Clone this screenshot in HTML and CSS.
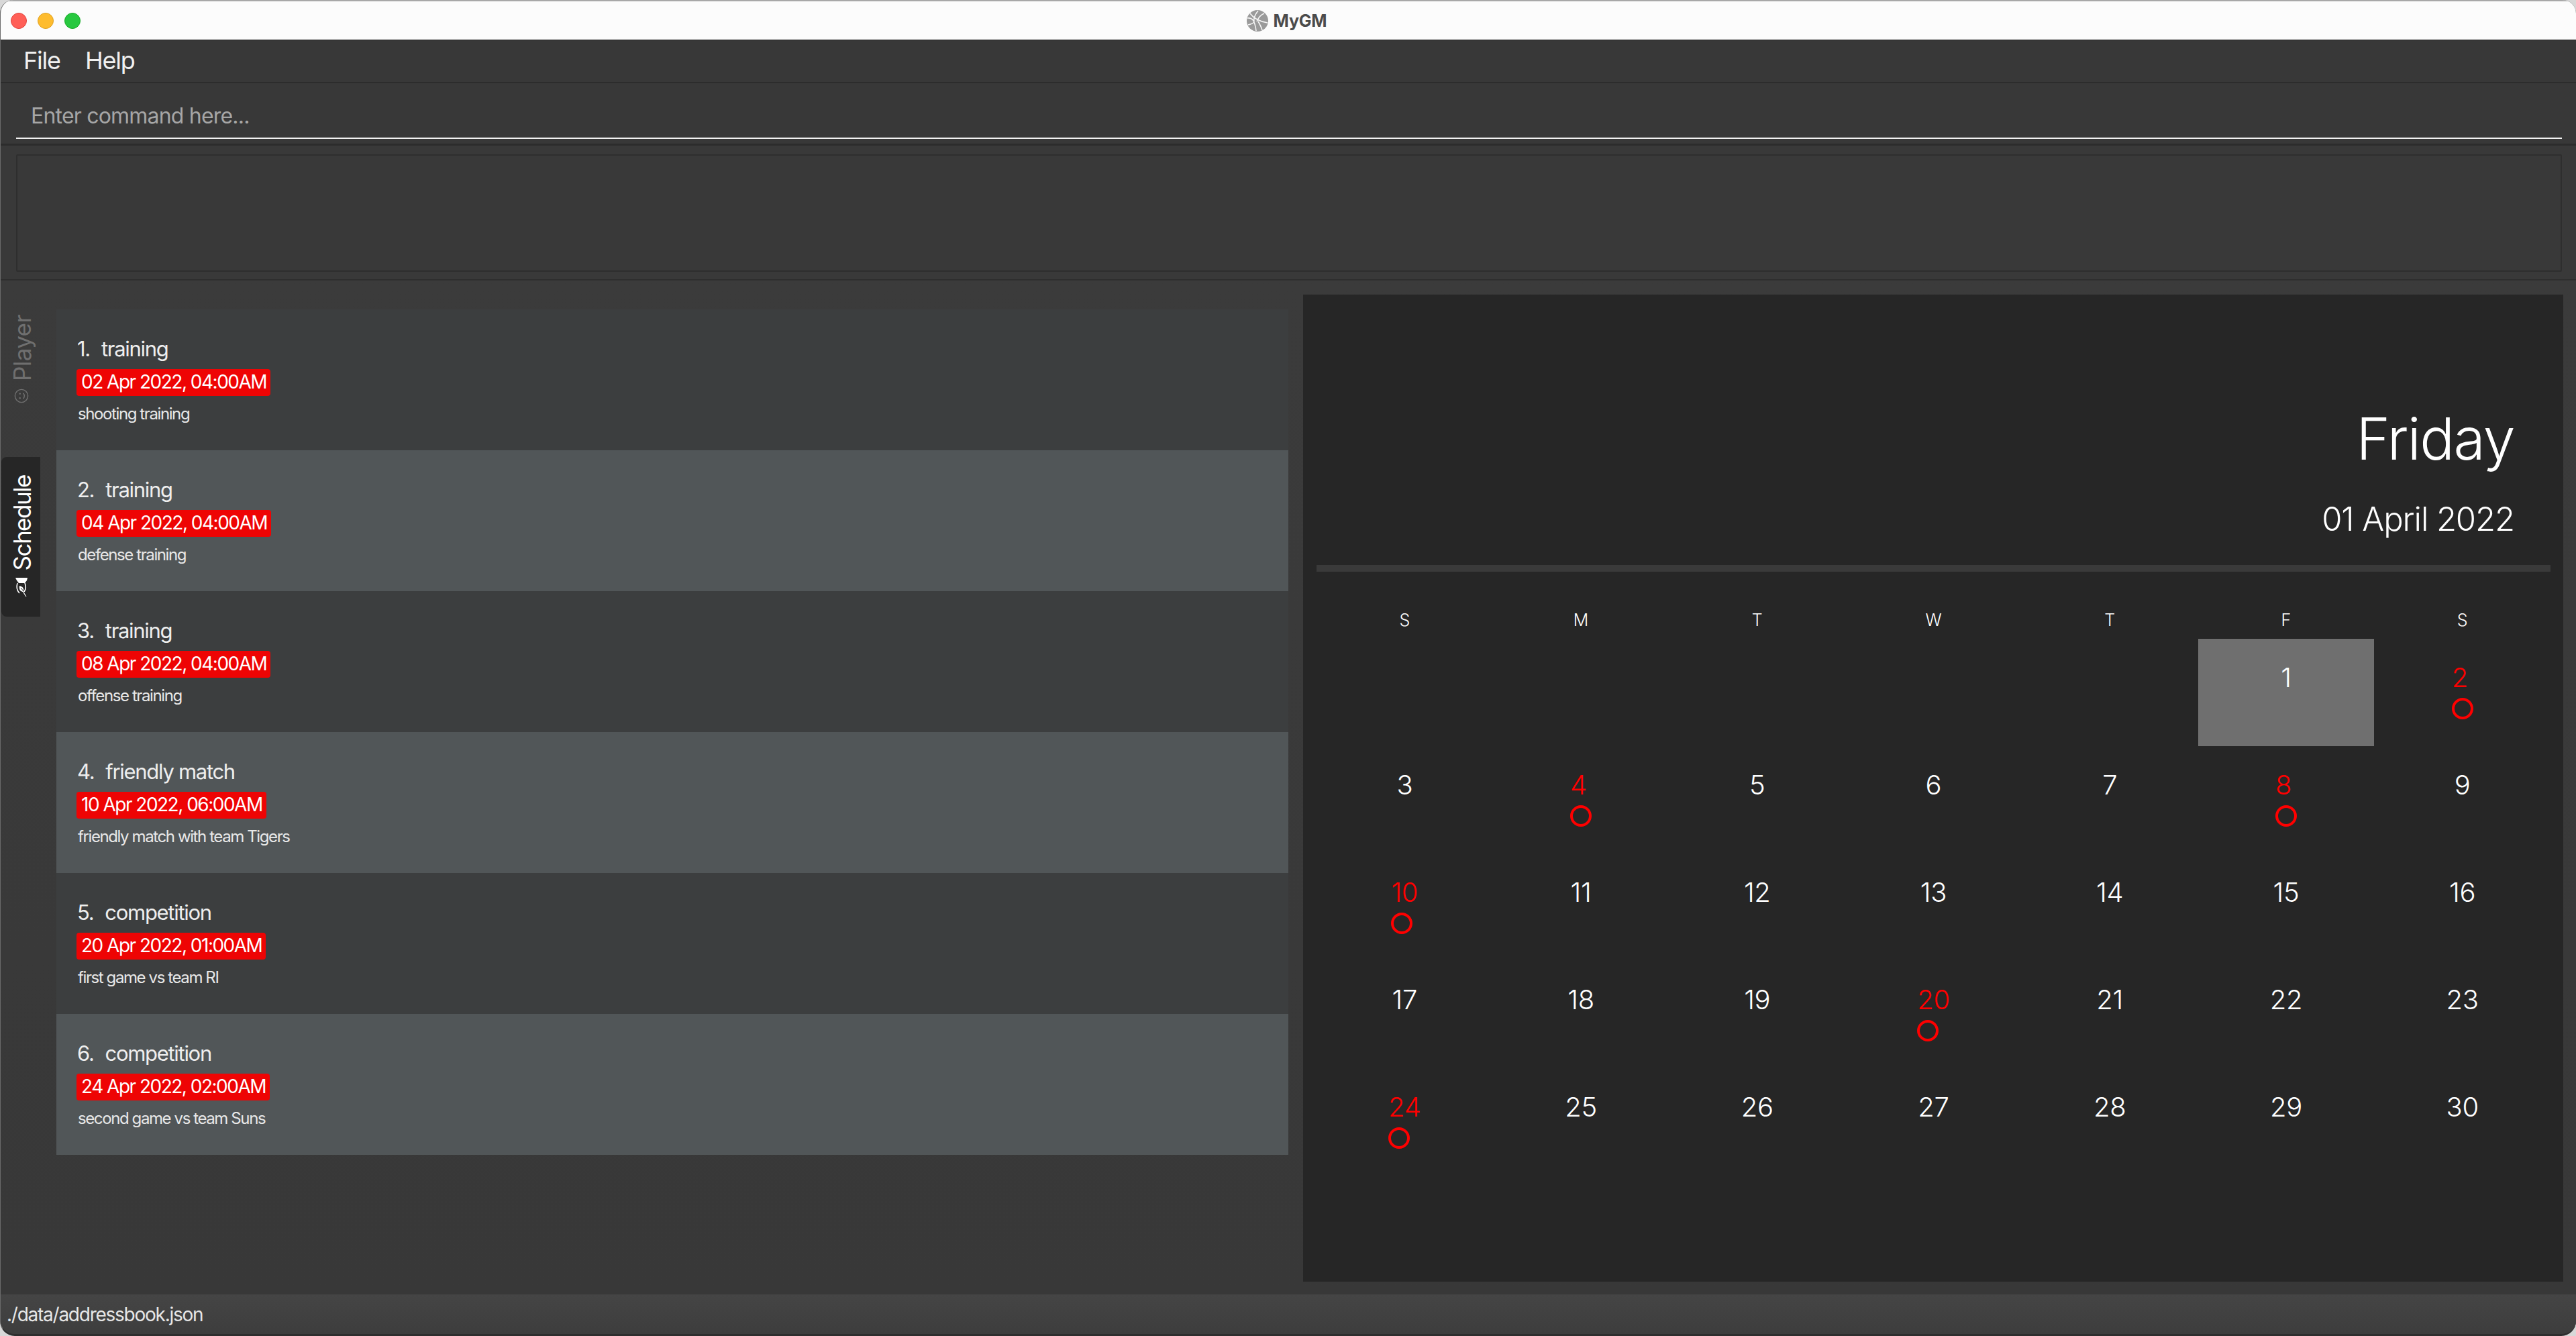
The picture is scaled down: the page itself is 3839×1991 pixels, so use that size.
FILE: index.html
```html
<!DOCTYPE html>
<html lang="en">
<head>
<meta charset="utf-8">
<title>MyGM</title>
<link rel="stylesheet" href="styles.css">
</head>
<body>
<div class="window">
  <header class="titlebar">
    <div class="lights"><span class="light red"></span><span class="light amber"></span><span class="light green"></span></div>
    <div class="app-title">
      <svg class="ball" viewBox="0 0 32 32"><circle cx="16" cy="16" r="16" fill="#9a9a9a"/><path d="M1 12c7-1 11 3 13 19M5 5c5 7 14 12 26 14M17 1c-5 6-7 12-6 17M26 5c-5 2-9 7-11 12M2 22c5-1 8-3 9-4M17 17c3 5 5 9 6 13" fill="none" stroke="#f4f4f4" stroke-width="1.6"/></svg>
      <span>MyGM</span>
    </div>
  </header>
  <nav class="menubar"><span>File</span><span>Help</span></nav>
  <section class="command"><div class="command-input">Enter command here...</div></section>
  <section class="result"><div class="result-box"></div></section>
  <main class="main">
    <aside class="tabs">
      <div class="tab tab-player">
        <span>Player</span>
        <svg class="tab-icon smile" viewBox="0 0 24 24"><circle cx="12" cy="12" r="10.5" fill="none" stroke="currentColor" stroke-width="1.6"/><circle cx="8.5" cy="9.5" r="1.3" fill="currentColor"/><circle cx="15.5" cy="9.5" r="1.3" fill="currentColor"/><path d="M7.5 14.5c2 3 7 3 9 0" fill="none" stroke="currentColor" stroke-width="1.6"/></svg>
      </div>
      <div class="tab tab-schedule">
        <span>Schedule</span>
        <svg class="tab-icon book" viewBox="0 0 18 29"><path d="M0 0h18l-1 4-3 4H5L2 4z" fill="#fff"/><path d="M3 8c-2 7-1 11 3 15M14 8c2 5 2 9-1 13" fill="none" stroke="#fff" stroke-width="1.6"/><path d="M6 12c5 1 7 4 6 9-5 0-7-4-6-9z" fill="#fff"/><path d="M7 14l9 14" fill="none" stroke="#fff" stroke-width="1.2"/><path d="M8 15l4 5" fill="none" stroke="#262626" stroke-width="1"/></svg>
      </div>
    </aside>
    <section class="list">
      <article class="row odd"><div class="row-name"><span class="idx">1.</span>training</div><div class="badge">02 Apr 2022, 04:00AM</div><div class="desc">shooting training</div></article>
      <article class="row even"><div class="row-name"><span class="idx">2.</span>training</div><div class="badge">04 Apr 2022, 04:00AM</div><div class="desc">defense training</div></article>
      <article class="row odd"><div class="row-name"><span class="idx">3.</span>training</div><div class="badge">08 Apr 2022, 04:00AM</div><div class="desc">offense training</div></article>
      <article class="row even"><div class="row-name"><span class="idx">4.</span>friendly match</div><div class="badge">10 Apr 2022, 06:00AM</div><div class="desc">friendly match with team Tigers</div></article>
      <article class="row odd"><div class="row-name"><span class="idx">5.</span>competition</div><div class="badge">20 Apr 2022, 01:00AM</div><div class="desc">first game vs team RI</div></article>
      <article class="row even"><div class="row-name"><span class="idx">6.</span>competition</div><div class="badge">24 Apr 2022, 02:00AM</div><div class="desc">second game vs team Suns</div></article>
    </section>
    <section class="calendar">
      <div class="cal-head">
        <div class="cal-day">Friday</div>
        <div class="cal-date">01 April 2022</div>
      </div>
      <div class="cal-rule"></div>
      <div class="cal-weekdays"><span>S</span><span>M</span><span>T</span><span>W</span><span>T</span><span>F</span><span>S</span></div>
      <div class="cal-grid">
        <div class="cell"></div><div class="cell"></div><div class="cell"></div><div class="cell"></div><div class="cell"></div>
        <div class="cell today"><div class="mark"><span>1</span></div></div>
        <div class="cell event"><div class="mark"><span>2</span><i></i></div></div>
        <div class="cell"><div class="mark"><span>3</span></div></div>
        <div class="cell event"><div class="mark"><span>4</span><i></i></div></div>
        <div class="cell"><div class="mark"><span>5</span></div></div>
        <div class="cell"><div class="mark"><span>6</span></div></div>
        <div class="cell"><div class="mark"><span>7</span></div></div>
        <div class="cell event"><div class="mark"><span>8</span><i></i></div></div>
        <div class="cell"><div class="mark"><span>9</span></div></div>
        <div class="cell event"><div class="mark"><span>10</span><i></i></div></div>
        <div class="cell"><div class="mark"><span>11</span></div></div>
        <div class="cell"><div class="mark"><span>12</span></div></div>
        <div class="cell"><div class="mark"><span>13</span></div></div>
        <div class="cell"><div class="mark"><span>14</span></div></div>
        <div class="cell"><div class="mark"><span>15</span></div></div>
        <div class="cell"><div class="mark"><span>16</span></div></div>
        <div class="cell"><div class="mark"><span>17</span></div></div>
        <div class="cell"><div class="mark"><span>18</span></div></div>
        <div class="cell"><div class="mark"><span>19</span></div></div>
        <div class="cell event"><div class="mark"><span>20</span><i></i></div></div>
        <div class="cell"><div class="mark"><span>21</span></div></div>
        <div class="cell"><div class="mark"><span>22</span></div></div>
        <div class="cell"><div class="mark"><span>23</span></div></div>
        <div class="cell event"><div class="mark"><span>24</span><i></i></div></div>
        <div class="cell"><div class="mark"><span>25</span></div></div>
        <div class="cell"><div class="mark"><span>26</span></div></div>
        <div class="cell"><div class="mark"><span>27</span></div></div>
        <div class="cell"><div class="mark"><span>28</span></div></div>
        <div class="cell"><div class="mark"><span>29</span></div></div>
        <div class="cell"><div class="mark"><span>30</span></div></div>
      </div>
    </section>
  </main>
  <footer class="status">./data/addressbook.json</footer>
</div>
</body>
</html>
```
FILE: styles.css
```css
* { box-sizing: border-box; }
html, body { margin: 0; height: 100%; background: #d8d8d8; overflow: hidden; }
body { font-family: Inter, "Liberation Sans", sans-serif; color: #fff; }

.window {
  height: 1991px; width: 3839px;
  display: flex; flex-direction: column;
  background: #3a3a3a;
  border-radius: 20px 20px 22px 22px;
  overflow: hidden;
  border-left: 1px solid #6a6a6a;
  border-bottom: 3px solid #2e2e2e;
}

.titlebar {
  height: 60px; flex: none;
  display: flex; align-items: center; justify-content: center;
  position: relative;
  background: #fcfcfc;
  border-top: 2px solid #a8a8a8;
  border-bottom: 1px solid #222;
}
.lights { position: absolute; left: 15px; top: 17px; display: flex; gap: 16px; }
.light { width: 24px; height: 24px; border-radius: 50%; }
.red { background: #ff5f57; border: 1px solid #e0443e; }
.amber { background: #febc2e; border: 1px solid #dea123; }
.green { background: #28c840; border: 1px solid #1aab29; }
.app-title { display: flex; align-items: center; gap: 8px; margin-left: -5px; color: #4b4b4b; font-size: 25px; font-weight: 700; letter-spacing: -0.2px; }
.ball { width: 32px; height: 32px; }

.menubar {
  height: 64px; flex: none;
  display: flex; align-items: center; gap: 37px;
  padding: 0 0 2px 34px;
  background: #383838;
  border-bottom: 2px solid #2c2c2c;
  font-size: 36px; letter-spacing: -1.2px; color: #f0f0f0;
}

.command {
  height: 93px; flex: none;
  padding: 0 21px 7px 23px;
  background: #383838;
  border-bottom: 3px solid #2c2c2c;
  display: flex; align-items: flex-end;
}
.command-input {
  width: 100%; height: 60px;
  padding: 0 0 7px 22px;
  border-bottom: 2px solid #f2f2f2;
  display: flex; align-items: center;
  font-size: 32px; letter-spacing: -0.8px; color: #a6a6a6;
}

.result {
  height: 201px; flex: none;
  padding: 13px 21px 11px 23px;
  background: #393939;
  border-bottom: 2px solid #2e2e2e;
}
.result-box { height: 100%; border: 2px solid #2e2e2e; border-radius: 2px; background: #393939; }

.main {
  flex: 1; min-height: 0;
  display: flex; padding: 21px 19px 19px 0;
  background: linear-gradient(#3b3b3b, #383838);
}

.tabs { width: 83px; flex: none; display: flex; flex-direction: column; align-items: flex-start; margin-top: 20px; padding-left: 1px; }
.tab {
  width: 58px;
  display: flex; flex-direction: column; align-items: center;
  font-size: 35px; letter-spacing: -1.5px;
}
.tab span { writing-mode: vertical-rl; transform: rotate(180deg) translateX(-2px); line-height: 1; }
.tab-icon { display: block; flex: none; }
.tab-player { height: 222px; padding-top: 10px; color: #6f6f6f; gap: 11px; letter-spacing: -0.6px; }
.tab-schedule { height: 238px; padding-top: 27px; gap: 10px; background: #262626; border-radius: 8px 0 0 8px; color: #fff; }
.smile { width: 22px; height: 22px; transform: rotate(-90deg); margin-left: 2px; }
.book { width: 18px; height: 29px; margin-left: 2px; }

.list { width: 1836px; flex: none; display: flex; flex-direction: column; margin-top: 22px; margin-right: 22px; }
.row { height: 210px; padding: 38px 0 0 30px; flex: none; }
.odd { background: #3c3e3f; }
.even { background: #515658; }
.row-name { font-size: 31px; line-height: 42px; letter-spacing: -1.3px; color: #eee; }
.idx { margin-left: 1px; margin-right: 17px; }
.badge {
  display: table;
  margin-top: 9px;
  height: 40px; line-height: 39px;
  padding: 0 6px 0 7px;
  background: #ee0404;
  border-radius: 4px;
  font-size: 28px; letter-spacing: -1.5px; color: #fff;
}
.desc { margin: 11px 0 0 2px; font-size: 24px; line-height: 32px; letter-spacing: -1.4px; color: #e8e8e8; }

.calendar {
  flex: 1; min-width: 0;
  display: flex; flex-direction: column;
  background: #262626;
  padding: 0 19px 0 20px;
  overflow: hidden;
}
.cal-head { height: 403px; flex: none; padding: 162px 54px 0 0; text-align: right; }
.cal-day { font-size: 86px; line-height: 106px; font-weight: 300; letter-spacing: -1.6px; }
.cal-date { margin-top: 37px; font-size: 49px; line-height: 60px; font-weight: 300; letter-spacing: -1.1px; }
.cal-rule { height: 10px; flex: none; background: #3a3a3a; }
.cal-weekdays { height: 100px; flex: none; display: grid; grid-template-columns: repeat(7, 1fr); align-items: center; text-align: center; font-size: 25px; font-weight: 300; padding-top: 43px; }
.cal-grid { display: grid; grid-template-columns: repeat(7, 1fr); grid-auto-rows: 160px; }
.cell { display: flex; justify-content: center; padding-top: 34px; }
.today { background: #6f6f6f; }
.mark { display: inline-flex; flex-direction: column; align-items: flex-start; font-size: 40px; line-height: 48px; font-weight: 350; letter-spacing: -0.3px; }
.event { color: #ff0000; }
.mark i { display: block; width: 32px; height: 32px; margin-top: 6px; border: 4px solid #ff0000; border-radius: 50%; }

.status {
  height: 59px; flex: none;
  display: flex; align-items: center;
  padding: 0 0 0 9px;
  background: linear-gradient(#454545, #3d3d3d);
  font-size: 28px; letter-spacing: -1.25px; color: #e6e6e6;
}
```
